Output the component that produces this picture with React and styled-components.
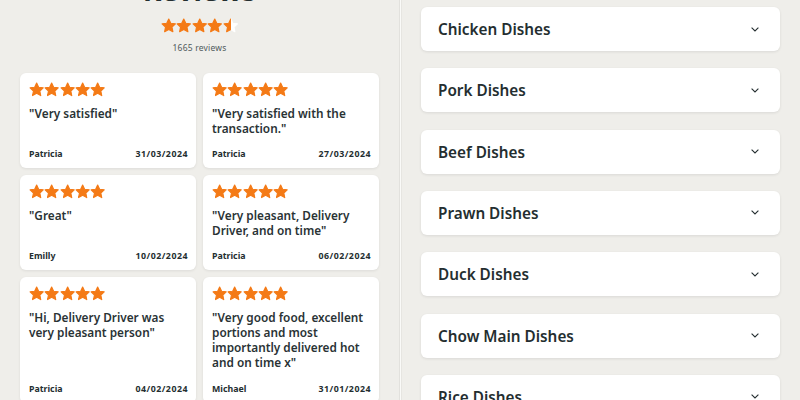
import React from "react";
import styled, { createGlobalStyle } from "styled-components";

const Global = createGlobalStyle`
  html, body { margin: 0; padding: 0; background: #efeeea; }
  body { font-family: "Noto Sans", "Open Sans", sans-serif; color: #242e30; overflow: hidden; }
  * { box-sizing: border-box; }
`;

const ORANGE = "#f47a16";

const Page = styled.div`
  display: flex;
  width: 800px;
  height: 400px;
  overflow: hidden;
  background: #efeeea;
`;

const LeftCol = styled.section`
  width: 399px;
  flex: none;
  display: flex;
  flex-direction: column;
  align-items: center;
  padding: 0 20px;
`;

const Divider = styled.div`
  width: 3px;
  flex: none;
  border-left: 1px solid #e2e1dd;
  background: #fafaf8;
  border-right: 1px solid #e6e5e1;
`;

const RightCol = styled.section`
  flex: 1;
  display: flex;
  flex-direction: column;
  gap: 17.33px;
  padding: 7px 20px 0 19px;
`;

const Title = styled.h2`
  margin: -26px 0 0;
  font-size: 28px;
  font-weight: 700;
  line-height: 32px;
`;

const StarRow = styled.div`
  display: flex;
  gap: ${(p) => p.$gap || 0}px;
  margin-top: ${(p) => p.$mt || 0}px;
`;

const Count = styled.div`
  margin-top: 8px;
  font-size: 8.5px;
  color: #4f5a5c;
  letter-spacing: 0.2px;
`;

const Grid = styled.div`
  margin-top: 20px;
  width: 100%;
  display: grid;
  grid-template-columns: 1fr 1fr;
  gap: 7px;
`;

const Card = styled.article`
  background: #fff;
  border-radius: 6px;
  box-shadow: 0 1px 3px rgba(0, 0, 0, 0.08);
  padding: 9px 8px 8px 9px;
  display: flex;
  flex-direction: column;
  min-height: ${(p) => p.$h}px;
`;

const Quote = styled.p`
  margin: 9px 0 0;
  font-size: 11.8px;
  line-height: 15px;
  font-weight: 600;
  flex: 1;
  color: #2a3335;
`;

const Foot = styled.div`
  display: flex;
  justify-content: space-between;
  font-size: 8.8px;
  font-weight: 700;
  margin-top: 10px;
  line-height: 12px;
`;

const DateText = styled.span`
  letter-spacing: 0.5px;
`;

const Acc = styled.div`
  background: #fff;
  border-radius: 6px;
  box-shadow: 0 1px 3px rgba(0, 0, 0, 0.09);
  height: 44px;
  flex: none;
  display: flex;
  align-items: center;
  justify-content: space-between;
  padding: 0 21px 0 17px;
  font-size: 15.3px;
  font-weight: 600;
`;

const Star = ({ size = 15, fill = 1 }) => {
  const id = `half-${Math.random().toString(36).slice(2)}`;
  const d =
    "M12 1.6l3.1 6.6 7.2.9-5.3 5 1.4 7.2L12 17.8l-6.4 3.5 1.4-7.2-5.3-5 7.2-.9z";
  return (
    <svg width={size} height={size} viewBox="0 0 24 24">
      {fill < 1 && (
        <defs>
          <linearGradient id={id}>
            <stop offset={fill} stopColor={ORANGE} />
            <stop offset={fill} stopColor="#ffffff" />
          </linearGradient>
        </defs>
      )}
      <path
        d={d}
        fill={fill < 1 ? `url(#${id})` : ORANGE}
        stroke={fill < 1 ? `url(#${id})` : ORANGE}
        strokeWidth="1.8"
        strokeLinejoin="round"
      />
    </svg>
  );
};

const Chevron = () => (
  <svg width="8" height="5" viewBox="0 0 8 5">
    <path d="M0.6 0.6L4 4l3.4-3.4" fill="none" stroke="#242e30" strokeWidth="1.1" />
  </svg>
);

const reviews = [
  { q: '"Very satisfied"', n: "Patricia", d: "31/03/2024", h: 95 },
  { q: '"Very satisfied with the transaction."', n: "Patricia", d: "27/03/2024", h: 95 },
  { q: '"Great"', n: "Emilly", d: "10/02/2024", h: 95 },
  { q: '"Very pleasant, Delivery Driver, and on time"', n: "Patricia", d: "06/02/2024", h: 95 },
  { q: '"Hi, Delivery Driver was very pleasant person"', n: "Patricia", d: "04/02/2024", h: 126 },
  { q: '"Very good food, excellent portions and most importantly delivered hot and on time x"', n: "Michael", d: "31/01/2024", h: 126 },
];

const dishes = [
  "Chicken Dishes",
  "Pork Dishes",
  "Beef Dishes",
  "Prawn Dishes",
  "Duck Dishes",
  "Chow Main Dishes",
  "Rice Dishes",
];

export default function App() {
  return (
    <Page>
      <Global />
      <LeftCol>
        <Title>Reviews</Title>
        <StarRow $mt={12}>
          {[1, 1, 1, 1, 0.5].map((f, i) => (
            <Star key={i} size={15.5} fill={f} />
          ))}
        </StarRow>
        <Count>1665 reviews</Count>
        <Grid>
          {reviews.map((r, i) => (
            <Card key={i} $h={r.h}>
              <StarRow>
                {[0, 1, 2, 3, 4].map((k) => (
                  <Star key={k} size={15.3} />
                ))}
              </StarRow>
              <Quote>{r.q}</Quote>
              <Foot>
                <span>{r.n}</span>
                <DateText>{r.d}</DateText>
              </Foot>
            </Card>
          ))}
        </Grid>
      </LeftCol>
      <Divider />
      <RightCol>
        {dishes.map((d) => (
          <Acc key={d}>
            <span>{d}</span>
            <Chevron />
          </Acc>
        ))}
      </RightCol>
    </Page>
  );
}
